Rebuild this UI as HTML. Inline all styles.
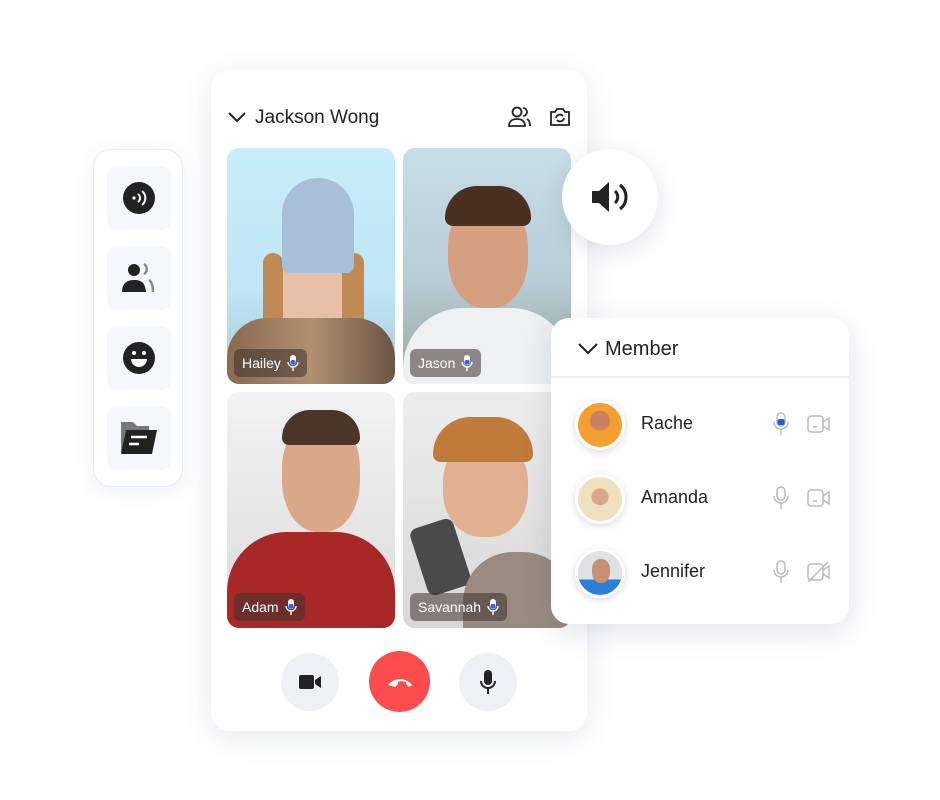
<!DOCTYPE html>
<html><head><style>
*{margin:0;padding:0;box-sizing:border-box}
body{width:940px;height:800px;background:#fff;font-family:"Liberation Sans",sans-serif;position:relative;overflow:hidden;color:#222}
.abs{position:absolute}
.card{left:211px;top:70px;width:376px;height:661px;background:#fff;border-radius:18px;box-shadow:0 6px 30px rgba(60,70,110,.12)}
.tile{position:absolute;width:168px;height:236px;border-radius:12px;overflow:hidden}
.lbl{position:absolute;left:7px;bottom:7px;height:28px;padding:0 8px;border-radius:6px;background:rgba(60,50,45,.55);color:#fff;font-size:14px;line-height:28px;display:flex;align-items:center;gap:6px}
.side{left:93px;top:149px;width:90px;height:338px;background:#fff;border-radius:18px;border:1px solid #e4ebfb;box-shadow:0 4px 20px rgba(60,70,110,.08)}
.si{position:absolute;left:13px;width:64px;height:64px;background:#f6f7fb;border-radius:10px;display:flex;align-items:center;justify-content:center}
.btn{position:absolute;top:653px;width:58px;height:58px;border-radius:50%;background:#eef0f3;display:flex;align-items:center;justify-content:center}
.mem{left:551px;top:318px;width:298px;height:306px;background:#fff;border-radius:18px;box-shadow:0 8px 30px rgba(60,70,110,.15)}
.row{position:absolute;left:0;width:298px;height:60px}
.av{position:absolute;left:24px;top:5px;width:50px;height:50px;border-radius:50%;border:3px solid #fff;box-shadow:0 2px 8px rgba(0,0,0,.15);overflow:hidden}
.nm{position:absolute;left:90px;top:18px;font-size:18px;color:#222}
</style></head><body>
<svg width="0" height="0" style="position:absolute"><defs><symbol id="m" viewBox="0 0 12 18"><rect x="3" y="1" width="6" height="10" rx="3" fill="#fff"/><rect x="3.5" y="6" width="5" height="4.5" rx="2" fill="#2a62ff"/><path d="M1 8a5 5 0 0010 0M6 13v4" stroke="#fff" stroke-width="1.4" fill="none"/></symbol></defs></svg>
<div class="abs card">
 <svg class="abs" style="left:17px;top:41px" width="18" height="12" viewBox="0 0 18 12"><path d="M1 2l8 8 8-8" stroke="#222" stroke-width="2" fill="none"/></svg>
 <div class="abs" style="left:44px;top:37px;font-size:19px;color:#222">Jackson Wong</div>
 <svg class="abs" style="left:296px;top:36px" width="24" height="22" viewBox="0 0 24 22" fill="none" stroke="#222" stroke-width="1.8"><circle cx="10" cy="6" r="4.5"/><path d="M2 20c0-5 3.5-7 8-7s8 2 8 7z"/><path d="M16 2a4 4 0 010 8M20 13c2 1 3 3 3 7"/></svg>
 <svg class="abs" style="left:338px;top:36px" width="22" height="21" viewBox="0 0 22 21" fill="none" stroke="#222" stroke-width="1.8"><path d="M2 6h4l2-3h6l2 3h4v13H2z"/><path d="M7 12a4 4 0 017-2M15 12a4 4 0 01-7 2"/></svg>
</div>
<div class="tile" style="left:227px;top:148px;background:linear-gradient(#c8ecf9,#bfe6f5 60%,#a8c8d8)">
 <div class="abs" style="left:52px;top:95px;width:70px;height:90px;border-radius:40%;background:#e6c0a8"></div>
 <div class="abs" style="left:36px;top:105px;width:20px;height:120px;background:#c08a55;border-radius:10px"></div>
 <div class="abs" style="left:115px;top:105px;width:22px;height:120px;background:#c08a55;border-radius:10px"></div>
 <div class="abs" style="left:55px;top:30px;width:72px;height:95px;border-radius:40px 40px 8px 8px;background:#a8bfd8"></div>
 <div class="abs" style="left:0;top:170px;width:168px;height:70px;background:linear-gradient(90deg,#8a6a50,#b09070,#6b5545);border-radius:40px 40px 0 0"></div>
 <div class="lbl">Hailey <svg width="12" height="18"><use href="#m"/></svg></div>
</div>
<div class="tile" style="left:403px;top:148px;background:linear-gradient(#c7dde8,#b8cdd6 55%,#9aa7a0)">
 <div class="abs" style="left:45px;top:50px;width:80px;height:110px;border-radius:45%;background:#d4a080"></div>
 <div class="abs" style="left:42px;top:38px;width:86px;height:40px;border-radius:40px 40px 10px 10px;background:#4a3020"></div>
 <div class="abs" style="left:0;top:160px;width:168px;height:80px;background:#eef0f2;border-radius:60px 60px 0 0"></div>
 <div class="lbl">Jason <svg width="12" height="18"><use href="#m"/></svg></div>
</div>
<div class="tile" style="left:227px;top:392px;background:linear-gradient(#f2f2f2,#dcdcdc)">
 <div class="abs" style="left:55px;top:25px;width:78px;height:115px;border-radius:45%;background:#d8a888"></div>
 <div class="abs" style="left:55px;top:18px;width:78px;height:35px;border-radius:40px 40px 10px 10px;background:#4a3528"></div>
 <div class="abs" style="left:0;top:140px;width:168px;height:100px;background:#a82828;border-radius:60px 60px 0 0"></div>
 <div class="lbl">Adam <svg width="12" height="18"><use href="#m"/></svg></div>
</div>
<div class="tile" style="left:403px;top:392px;background:linear-gradient(#ededed,#d8d8d8)">
 <div class="abs" style="left:40px;top:45px;width:85px;height:100px;border-radius:45%;background:#e0b090"></div>
 <div class="abs" style="left:30px;top:25px;width:100px;height:45px;border-radius:50px 50px 10px 10px;background:#c07a3a"></div>
 <div class="abs" style="left:15px;top:130px;width:45px;height:70px;border-radius:8px;background:#4a4a4a;transform:rotate(-18deg)"></div>
 <div class="abs" style="left:60px;top:160px;width:110px;height:80px;background:#9a8a80;border-radius:50px 50px 0 0"></div>
 <div class="lbl">Savannah <svg width="12" height="18"><use href="#m"/></svg></div>
</div>
<div class="btn" style="left:281px"><svg width="24" height="18" viewBox="0 0 24 18"><rect x="1" y="2" width="15" height="14" rx="2" fill="#222"/><path d="M17 7l6-4v12l-6-4z" fill="#222"/></svg></div>
<div class="btn" style="left:369px;top:651px;width:61px;height:61px;background:#fb4d4d"><svg width="28" height="12" viewBox="0 0 28 12"><path d="M2 9c7-8 17-8 24 0l-3 2-3-3v-2c-3-1-6-1-8 0v2l-3 3z" fill="#fff"/></svg></div>
<div class="btn" style="left:459px"><svg width="18" height="26" viewBox="0 0 18 26"><rect x="5" y="1" width="8" height="15" rx="4" fill="#222"/><path d="M2 12a7 7 0 0014 0M9 19v6" stroke="#222" stroke-width="2" fill="none"/></svg></div>

<div class="abs side">
 <div class="si" style="top:16px"><svg width="32" height="32" viewBox="0 0 32 32"><circle cx="16" cy="16" r="16" fill="#222"/><circle cx="11" cy="16" r="1.6" fill="#fff"/><path d="M15 12a5 5 0 010 8M19 9a9 9 0 010 14" stroke="#fff" stroke-width="2" fill="none"/></svg></div>
 <div class="si" style="top:96px"><svg width="34" height="32" viewBox="0 0 34 32"><circle cx="12" cy="8" r="6" fill="#222"/><path d="M0 30c0-8 4-12 12-12s11 3 12 12z" fill="#222"/><path d="M22 2a6 6 0 010 10M27 18c3 2 4 6 4 12" stroke="#888" stroke-width="2.5" fill="none"/></svg></div>
 <div class="si" style="top:176px"><svg width="32" height="32" viewBox="0 0 32 32"><circle cx="16" cy="16" r="16" fill="#222"/><circle cx="11" cy="11" r="2" fill="#fff"/><circle cx="21" cy="11" r="2" fill="#fff"/><path d="M8 17h16a8 8 0 01-16 0z" fill="#fff"/></svg></div>
 <div class="si" style="top:256px"><svg width="36" height="32" viewBox="0 0 36 32"><path d="M0 0h12l4 4h12v26H0z" fill="#777"/><path d="M5 8h31l-5 24H0z" fill="#222"/><path d="M10 15h16M8 22h10" stroke="#fff" stroke-width="2.5"/></svg></div>
</div>

<div class="abs" style="left:562px;top:149px;width:96px;height:96px;border-radius:50%;background:#fff;box-shadow:0 6px 24px rgba(60,70,110,.15);display:flex;align-items:center;justify-content:center"><svg width="40" height="34" viewBox="0 0 40 34"><path d="M2 11h7l10-9v30l-10-9H2z" fill="#222"/><path d="M25 11a8 8 0 010 12M30 5a15 15 0 010 24" stroke="#222" stroke-width="3" fill="none"/></svg></div>

<div class="abs mem">
 <svg class="abs" style="left:27px;top:24px" width="20" height="13" viewBox="0 0 20 13"><path d="M1 2l9 9 9-9" stroke="#222" stroke-width="2" fill="none"/></svg>
 <div class="abs" style="left:54px;top:20px;font-size:20px;color:#222">Member</div>
 <div class="abs" style="left:0;top:58px;width:298px;height:2px;background:#eef0f4"></div>
 <div class="row" style="top:77px"><div class="av" style="background:radial-gradient(circle at 50% 40%,#c98060 0 28%,#f4a030 30%)"></div><div class="nm">Rache</div>
  <svg class="abs" style="left:222px;top:17px" width="16" height="24" viewBox="0 0 16 24"><rect x="4" y="1" width="8" height="13" rx="4" fill="none" stroke="#bbb" stroke-width="1.5"/><rect x="4.5" y="7" width="7" height="6" rx="2" fill="#1e5cf0"/><path d="M1 10a7 7 0 0014 0M8 17v6" stroke="#bbb" stroke-width="1.5" fill="none"/></svg>
  <svg class="abs" style="left:256px;top:20px" width="24" height="18" viewBox="0 0 24 18" fill="none" stroke="#bbb" stroke-width="1.5"><rect x="1" y="1" width="15" height="16" rx="3"/><path d="M16 7l6-4v12l-6-4M6 12h4"/></svg></div>
 <div class="row" style="top:151px"><div class="av" style="background:radial-gradient(circle at 50% 45%,#d8a888 0 25%,#efe0c0 27%)"></div><div class="nm">Amanda</div>
  <svg class="abs" style="left:222px;top:17px" width="16" height="24" viewBox="0 0 16 24" fill="none" stroke="#bbb" stroke-width="1.5"><rect x="4" y="1" width="8" height="13" rx="4"/><path d="M1 10a7 7 0 0014 0M8 17v6"/></svg>
  <svg class="abs" style="left:256px;top:20px" width="24" height="18" viewBox="0 0 24 18" fill="none" stroke="#bbb" stroke-width="1.5"><rect x="1" y="1" width="15" height="16" rx="3"/><path d="M16 7l6-4v12l-6-4M6 12h4"/></svg></div>
 <div class="row" style="top:225px"><div class="av" style="background:linear-gradient(#dde2e6 65%,#2a80d8 65%)"><div style="position:absolute;left:14px;top:8px;width:18px;height:24px;border-radius:45%;background:#c89070"></div></div><div class="nm">Jennifer</div>
  <svg class="abs" style="left:222px;top:17px" width="16" height="24" viewBox="0 0 16 24" fill="none" stroke="#bbb" stroke-width="1.5"><rect x="4" y="1" width="8" height="13" rx="4"/><path d="M1 10a7 7 0 0014 0M8 17v6"/></svg>
  <svg class="abs" style="left:256px;top:18px" width="24" height="22" viewBox="0 0 24 22" fill="none" stroke="#bbb" stroke-width="1.5"><rect x="1" y="3" width="15" height="16" rx="3"/><path d="M16 9l6-4v12l-6-4M1 21L21 1"/></svg></div>
</div>
</body></html>
